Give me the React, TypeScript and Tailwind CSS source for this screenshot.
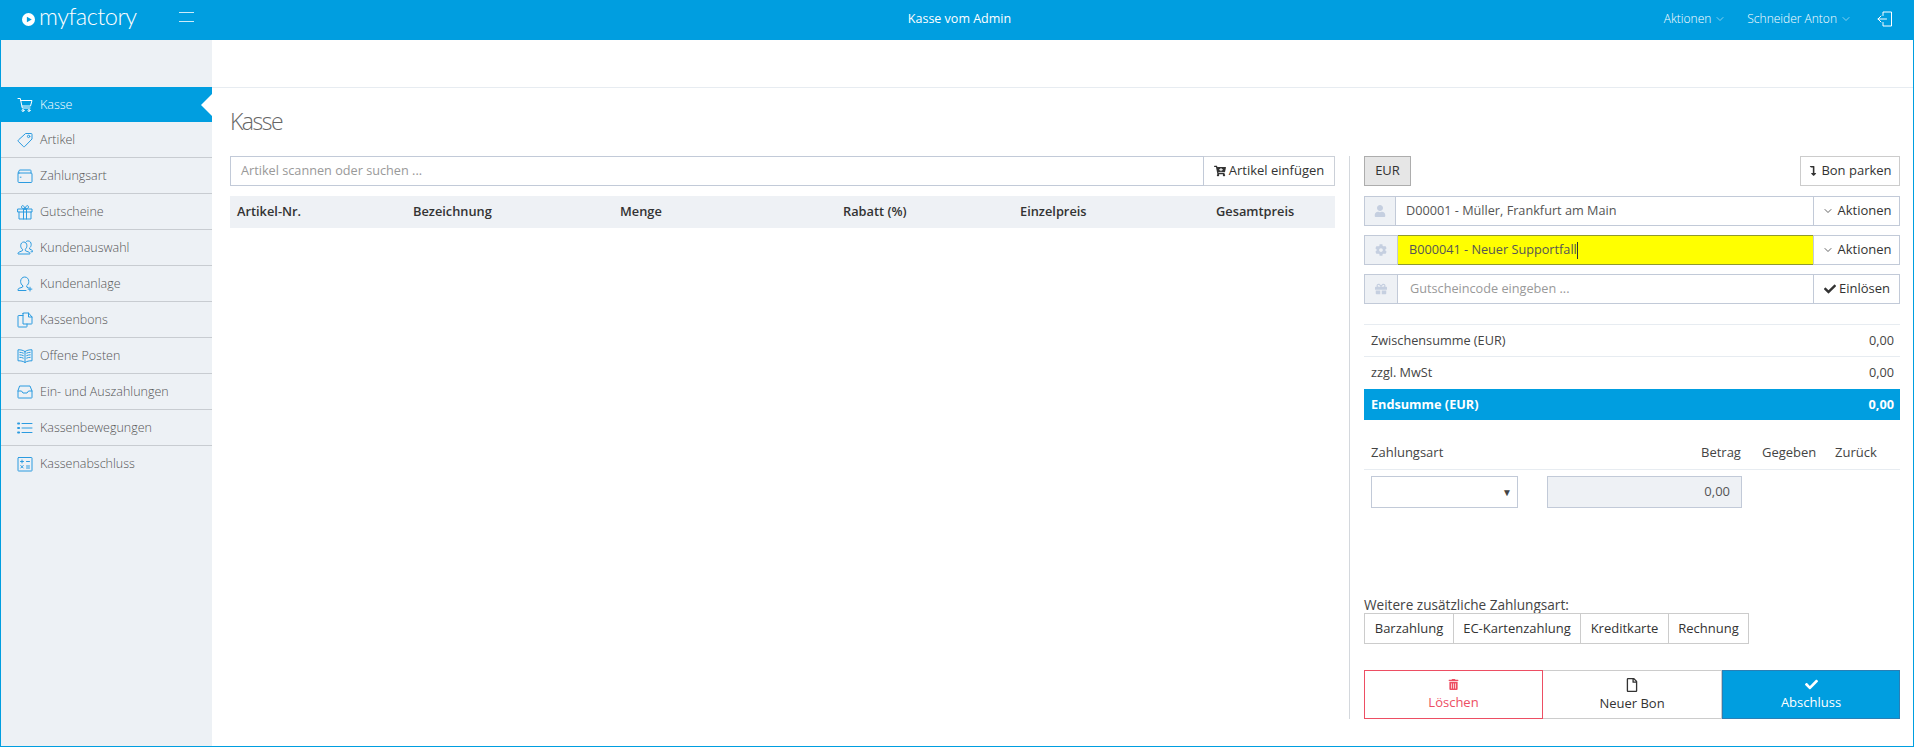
import { FaCartPlus, FaCheck, FaCog, FaGift, FaLevelDownAlt, FaRegFile, FaTrashAlt, FaUser } from "react-icons/fa"
import { ChevronDown } from "lucide-react"
import type { ReactNode } from "react"

const line = {
  fill: "none",
  stroke: "currentColor",
  strokeWidth: 1,
  strokeLinecap: "round" as const,
  strokeLinejoin: "round" as const,
}

function Ico({ children }: { children: ReactNode }) {
  return (
    <svg viewBox="0 0 16 16" className="w-[16px] h-[16px] shrink-0" {...line}>
      {children}
    </svg>
  )
}

const menu: { label: string; icon: ReactNode }[] = [
  {
    label: "Artikel",
    icon: (
      <Ico>
        <path d="M9 1.500h5.200a.8.8 0 0 1 .8.8V7L7.600 14.600a.8.8 0 0 1-1.100 0L1.200 9.300a.8.8 0 0 1 0-1.100Z" />
        <circle cx="11.600" cy="4.400" r="1.200" />
      </Ico>
    ),
  },
  {
    label: "Zahlungsart",
    icon: (
      <Ico>
        <path d="M1 5 2.500 2h10.800c.4 0 .7.300.7.700V5" />
        <rect x="1" y="5" width="14" height="9.500" rx="1" />
        <path d="M3.200 9.200h.8" />
      </Ico>
    ),
  },
  {
    label: "Gutscheine",
    icon: (
      <Ico>
        <rect x="1" y="5" width="14" height="3" />
        <path d="M2 8v7h12V8M6.500 5v10M9.500 5v10" />
        <path d="M8 5C6 5 4.500 4.400 4.500 2.900 4.500 1.700 5.700 1.200 6.500 1.900 7.300 2.600 8 5 8 5Zm0 0c2 0 3.500-.6 3.500-2.100 0-1.200-1.200-1.700-2-1-.8.7-1.500 3.100-1.500 3.100Z" />
      </Ico>
    ),
  },
  {
    label: "Kundenauswahl",
    icon: (
      <Ico>
        <path d="M5.500 9.500C4.300 8.600 3.700 7.200 3.700 5.700 3.700 3.500 5 2 6.800 2s3.100 1.500 3.100 3.700c0 1.500-.6 2.900-1.800 3.800l.4 1.300 3.500 1.400c.6.300.9.700.9 1.300v.5H1v-.5c0-.6.300-1 .9-1.300l3.200-1.400Z" />
        <path d="M9.500 1.300c.5-.3 1-.4 1.500-.4 1.900 0 3.200 1.500 3.200 3.600 0 1.400-.6 2.700-1.700 3.500l.3 1.200 1.900.8c.5.200.8.600.8 1.100v.7h-1.500" />
      </Ico>
    ),
  },
  {
    label: "Kundenanlage",
    icon: (
      <Ico>
        <path d="M5.800 9.800C4.400 8.800 3.600 7.200 3.600 5.400 3.600 3 5.300 1 7.700 1s4.100 2 4.100 4.400c0 1.800-.8 3.400-2.200 4.400l.4 1.500 1.500.6" />
        <path d="M9 14.500H1v-.7c0-.7.400-1.200 1-1.500l3.400-1.100.4-.9" />
        <path d="M13 11.200v3.800M11.100 13.100h3.800" />
      </Ico>
    ),
  },
  {
    label: "Kassenbons",
    icon: (
      <Ico>
        <path d="M6 3.500H1.500a.5.500 0 0 0-.5.500v10.500a.5.500 0 0 0 .5.500h8a.5.500 0 0 0 .5-.500V12" />
        <path d="M6 1.500V12h8.500a.5.500 0 0 0 .5-.500V5l-3.500-4H6.500a.5.500 0 0 0-.5.500Z" />
        <path d="M11.500 1v4H15" />
      </Ico>
    ),
  },
  {
    label: "Offene Posten",
    icon: (
      <Ico>
        <path d="M8 3.500C6.500 2.300 3.800 1.700 1 1.800v11c2.800-.1 5.500.5 7 1.700 1.500-1.200 4.200-1.800 7-1.700v-11c-2.800-.1-5.500.5-7 1.700ZM8 3.500v11" />
        <path d="M2.800 4.300c1.200 0 2.400.3 3.500.8M2.800 6.800c1.200 0 2.400.3 3.500.8M2.800 9.300c1.200 0 2.400.3 3.500.8M13.200 4.300c-1.200 0-2.400.3-3.500.8M13.200 6.800c-1.200 0-2.400.3-3.500.8M13.200 9.300c-1.200 0-2.400.3-3.500.8" />
      </Ico>
    ),
  },
  {
    label: "Ein- und Auszahlungen",
    icon: (
      <Ico>
        <path d="M3 2h10l2 5v6.500c0 .3-.2.500-.5.500h-13a.5.500 0 0 1-.5-.500V7Z" />
        <path d="M1 7h3.500l1.500 2h4l1.500-2H15" />
      </Ico>
    ),
  },
  {
    label: "Kassenbewegungen",
    icon: (
      <Ico>
        <path d="M5 3.500h10M5 8h10M5 12.500h10" />
        <path d="M1 3.500h1.200M1 8h1.200M1 12.500h1.200" strokeWidth={1.800} />
      </Ico>
    ),
  },
  {
    label: "Kassenabschluss",
    icon: (
      <Ico>
        <rect x="1" y="1.500" width="14" height="13.500" rx=".5" />
        <path d="M3.500 5.500h3M5 4v3M9.500 5.500h3M9.500 10h3M9.500 12h3M3.800 9.500l2.400 2.500M6.200 9.500l-2.400 2.500" />
      </Ico>
    ),
  },
]

function InputRow({ icon, value, action, highlight, muted }: {
  icon: ReactNode
  value: ReactNode
  action: ReactNode
  highlight?: boolean
  muted?: boolean
}) {
  return (
    <div className="flex h-[30px] text-[12.700px]">
      <div
        className={
          highlight || muted
            ? "w-[34px] shrink-0 flex items-center justify-center bg-[#eef1f5] border border-[#c2cad8] text-[#c5cfe0] text-[12px]"
            : "w-[32px] shrink-0 flex items-center justify-center bg-[#eef1f5] border border-[#c2cad8] text-[#c5cfe0] text-[12px]"
        }
      >
        {icon}
      </div>
      <div
        className={
          highlight
            ? "flex-1 flex items-center pl-[11px] bg-[#ffff00] border-y border-[#8f9a2f] text-[#555]"
            : muted
              ? "flex-1 flex items-center pl-[12px] border-y border-[#c2cad8] text-[#999]"
              : "flex-1 flex items-center pl-[10px] border-y border-[#c2cad8] text-[#555]"
        }
      >
        {value}
      </div>
      <div className="w-[87px] shrink-0 flex items-center justify-center gap-[3px] pl-[1px] text-[13px] border border-[#c2cad8] text-[#333]">
        {action}
      </div>
    </div>
  )
}

function SumRow({ label, value, tall }: { label: string; value: string; tall?: boolean }) {
  return (
    <div
      className={
        tall
          ? "h-[33px] flex items-center justify-between pl-[7px] pr-[6px] border-t border-[#e7ecf1] text-[12.700px] text-[#444]"
          : "h-[32px] flex items-center justify-between pl-[7px] pr-[6px] border-t border-[#e7ecf1] text-[12.700px] text-[#444]"
      }
    >
      <span>{label}</span>
      <span>{value}</span>
    </div>
  )
}

export default function App() {
  return (
    <div className="h-[747px] flex flex-col bg-white border-x border-b border-[#009ee0] font-['Open_Sans',sans-serif] overflow-hidden">
      <header className="h-[40px] -mx-px pb-[2px] shrink-0 bg-[#009ee0] text-white flex items-center relative">
        <div className="flex items-center w-[179px] pl-[22px]">
          <svg viewBox="0 0 16 16" className="w-[13px] h-[13px] shrink-0">
            <path fillRule="evenodd" fill="#fff" d="M8 0a8 8 0 1 1 0 16A8 8 0 0 1 8 0ZM6 4.500v7L12 8Z" />
          </svg>
          <span className="ml-[4px] mb-[4px] text-[23.500px] font-light leading-none tracking-[-0.5px] font-['Lato',sans-serif]">myfactory</span>
        </div>
        <div className="w-[15px] h-[10px] mb-[4px] border-y border-white/80" />
        <div className="absolute left-[5px] right-0 text-center text-[12.500px]">Kasse vom Admin</div>
        <div className="ml-auto flex items-center text-[12px] font-light">
          <span>Aktionen</span>
          <ChevronDown className="ml-[3px] w-[12px] h-[12px] opacity-70" strokeWidth={1.500} />
          <span className="ml-[21px]">Schneider Anton</span>
          <ChevronDown className="ml-[3px] w-[12px] h-[12px] opacity-70" strokeWidth={1.500} />
          <svg viewBox="0 0 16 16" className="w-[16px] h-[16px] ml-[25px] mr-[21px]" {...line}>
            <path d="M6 4.500V1h8.500v14H6v-3.500M9.500 8H1M4 5 1 8l3 3" />
          </svg>
        </div>
      </header>

      <div className="flex-1 flex min-h-0">
        <aside className="w-[211px] shrink-0 bg-[#edf1f5] pt-[47px] font-light text-[12.500px] text-[#555]">
          <div className="relative h-[35px] -ml-px bg-[#009ee0] text-white flex items-center pl-[17px] gap-[7px]">
            <Ico>
              <path d="M1 1.500h2.300l2 9.500h7.700" />
              <path d="M3.700 3.500H15l-1.500 5.500H5" />
              <circle cx="6" cy="13.500" r="1" />
              <circle cx="12" cy="13.500" r="1" />
            </Ico>
            <span className="pt-px">Kasse</span>
            <div className="absolute right-0 top-1/2 -translate-y-1/2 border-y-[11px] border-r-[11px] border-y-transparent border-r-white" />
          </div>
          {menu.map((item, i) => (
            <div
              key={item.label}
              className={
                i === menu.length - 1
                  ? "h-[36px] flex items-center pl-[16px] gap-[7px]"
                  : "h-[36px] flex items-center pl-[16px] gap-[7px] border-b border-[#c8ccd1]"
              }
            >
              <span className="text-[#2b9be0]">{item.icon}</span>
              <span className="pt-px">{item.label}</span>
            </div>
          ))}
        </aside>

        <main className="flex-1 min-w-0">
          <div className="h-[48px] border-b border-[#e7ecf1]" />
          <h1 className="mt-[18px] ml-[18px] text-[23px] leading-[30px] font-light tracking-[-1.500px] text-[#666]">Kasse</h1>

          <div className="mt-[20px] flex">
            <section className="ml-[18px] w-[1105px] shrink-0">
              <div className="flex h-[30px] text-[13px]">
                <div className="flex-1 flex items-center pl-[10px] border border-[#c2cad8] text-[12.700px] text-[#999]">
                  Artikel scannen oder suchen ...
                </div>
                <div className="w-[131px] flex items-center justify-center gap-[3px] border-y border-r border-[#cbd0d8] text-[#333]">
                  <FaCartPlus className="text-[12px]" />
                  <span>Artikel einfügen</span>
                </div>
              </div>
              <div className="mt-[10px] h-[32px] bg-[#eef1f5] flex items-center text-[12.800px] font-semibold text-[#333]">
                <span className="w-[183px] pl-[7px]">Artikel-Nr.</span>
                <span className="w-[207px]">Bezeichnung</span>
                <span className="w-[223px]">Menge</span>
                <span className="w-[177px]">Rabatt (%)</span>
                <span className="w-[196px]">Einzelpreis</span>
                <span>Gesamtpreis</span>
              </div>
            </section>

            <section className="ml-[14px] w-[551px] h-[563px] pl-[14px] border-l border-[#d4d8dd] flex flex-col text-[13px]">
              <div className="flex justify-between">
                <div className="h-[30px] w-[47px] flex items-center justify-center bg-[#e6e6e6] border border-[#adadad] text-[#333]">EUR</div>
                <div className="h-[30px] w-[100px] flex items-center justify-center gap-[3px] border border-[#ccc] text-[#333]">
                  <FaLevelDownAlt className="text-[10px]" />
                  <span>Bon parken</span>
                </div>
              </div>

              <div className="mt-[10px] flex flex-col gap-[9px]">
                <InputRow
                  icon={<FaUser />}
                  value="D00001 - Müller, Frankfurt am Main"
                  action={<><ChevronDown className="w-[12px] h-[12px]" strokeWidth={1.500} /><span>Aktionen</span></>}
                />
                <InputRow
                  highlight
                  icon={<FaCog />}
                  value={<><span>B000041 - Neuer Supportfall</span><span className="w-px h-[17px] bg-[#333]" /></>}
                  action={<><ChevronDown className="w-[12px] h-[12px]" strokeWidth={1.500} /><span>Aktionen</span></>}
                />
                <InputRow
                  muted
                  icon={<FaGift />}
                  value="Gutscheincode eingeben ..."
                  action={<><FaCheck className="text-[12px]" /><span>Einlösen</span></>}
                />
              </div>

              <div className="mt-[20px]">
                <SumRow label="Zwischensumme (EUR)" value="0,00" />
                <SumRow tall label="zzgl. MwSt" value="0,00" />
                <div className="h-[31px] flex items-center justify-between pl-[7px] pr-[6px] bg-[#009ee0] text-white text-[12.700px] font-bold">
                  <span>Endsumme (EUR)</span>
                  <span>0,00</span>
                </div>
              </div>

              <div className="mt-[17px] h-[33px] flex items-center border-b border-[#e7ecf1] text-[#444] font-medium">
                <span className="pl-[7px] w-[337px]">Zahlungsart</span>
                <span className="w-[61px]">Betrag</span>
                <span className="w-[73px]">Gegeben</span>
                <span>Zurück</span>
              </div>

              <div className="mt-[6px] flex">
                <div className="ml-[7px] w-[147px] h-[32px] border border-[#c2cad8] flex items-center justify-end pr-[5px] text-[10px] text-[#444]">▼</div>
                <div className="ml-[29px] w-[195px] h-[32px] bg-[#eef1f5] border border-[#c2cad8] flex items-center justify-end pr-[11px] text-[#555]">0,00</div>
              </div>

              <div className="mt-auto text-[13.600px] leading-[16px] text-[#444]">Weitere zusätzliche Zahlungsart:</div>
              <div className="flex h-[31px] w-fit border border-[#ccc] text-[#333]">
                <div className="w-[89px] flex items-center justify-center border-r border-[#ccc]">Barzahlung</div>
                <div className="w-[127px] flex items-center justify-center border-r border-[#ccc]">EC-Kartenzahlung</div>
                <div className="w-[88px] flex items-center justify-center border-r border-[#ccc]">Kreditkarte</div>
                <div className="w-[79px] flex items-center justify-center">Rechnung</div>
              </div>

              <div className="mt-[26px] flex h-[49px]">
                <div className="w-[179px] pt-[2px] flex flex-col items-center justify-center gap-[3px] border border-[#ed4e63] text-[#ed4e63]">
                  <FaTrashAlt className="text-[11px]" />
                  <span>Löschen</span>
                </div>
                <div className="w-[179px] pt-[2px] flex flex-col items-center justify-center gap-[2px] border-y border-r border-[#ccc] text-[#333]">
                  <FaRegFile className="text-[14px]" />
                  <span>Neuer Bon</span>
                </div>
                <div className="flex-1 pt-[2px] flex flex-col items-center justify-center gap-[2px] bg-[#009ee0] border border-[#2a7fb5] text-white">
                  <FaCheck className="text-[13px]" />
                  <span>Abschluss</span>
                </div>
              </div>
            </section>
          </div>
        </main>
      </div>
    </div>
  )
}
